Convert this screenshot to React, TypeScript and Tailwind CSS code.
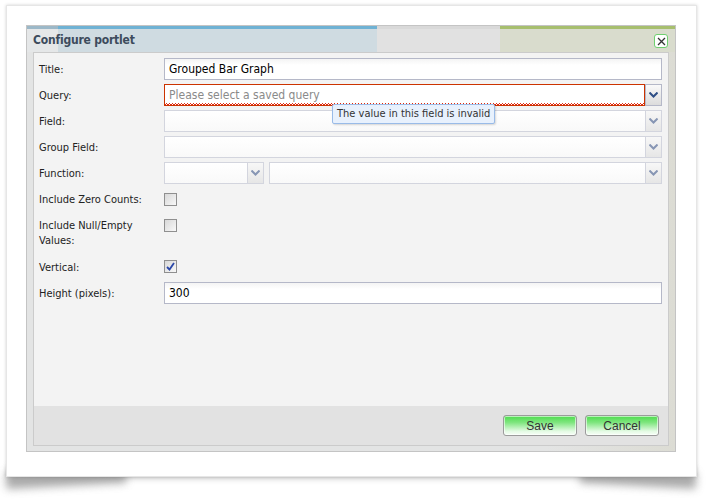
import React from 'react';

const font = { fontFamily: 'Tahoma, "DejaVu Sans Condensed", "Liberation Sans", sans-serif' };

const Chevron = ({ dark }: { dark?: boolean }) => (
  <svg width="9" height="6" viewBox="0 0 9 6">
    <path d="M0.5 0.5 L4.5 4.5 L8.5 0.5" fill="none" stroke={dark ? '#2f4f86' : '#8796b4'} strokeWidth="2" />
  </svg>
);

const Trigger = ({ dark }: { dark?: boolean }) => (
  <div
    className={`w-[17px] h-full shrink-0 flex items-center justify-center border ${
      dark ? 'border-[#b5b8c8] bg-[linear-gradient(#fafafa,#dcdcdc)]' : 'border-[#d3d5de] bg-[linear-gradient(#f7f7f7,#e6e6e6)]'
    }`}
  >
    <Chevron dark={dark} />
  </div>
);

const Combo = ({ className = '' }: { className?: string }) => (
  <div className={`h-[22px] flex ${className}`}>
    <div className="flex-1 border border-r-0 border-[#d3d5de] bg-[linear-gradient(#ffffff,#f9f9f9)]" />
    <Trigger />
  </div>
);

const Checkbox = ({ checked }: { checked?: boolean }) => (
  <div className="w-[13px] h-[13px] border border-[#8f8f8f] bg-[linear-gradient(135deg,#d8d8d8,#f8f8f8)] flex items-center justify-center">
    {checked && (
      <svg width="9" height="9" viewBox="0 0 9 9">
        <path d="M1 5 L3.5 7.5 L8 1" fill="none" stroke="#2a47a8" strokeWidth="1.8" />
      </svg>
    )}
  </div>
);

const Label = ({ children, className = '' }: { children: React.ReactNode; className?: string }) => (
  <div className={`w-[125px] shrink-0 text-[11px] leading-[15px] text-[#222] ${className}`}>{children}</div>
);

const GreenButton = ({ label, w }: { label: string; w: string }) => (
  <button
    className={`${w} h-[21px] rounded-[3px] border border-[#9b9b9b] bg-[linear-gradient(#4cdb4c_0%,#80e680_35%,#e4fae4_80%,#f6fff6_100%)] text-[12px] text-[#333] shadow-[inset_0_0_0_1px_rgba(255,255,255,0.6)]`}
    style={{ fontFamily: 'Arial, "Liberation Sans", sans-serif' }}
  >
    {label}
  </button>
);

export default function App() {
  return (
    <div className="w-[711px] h-[503px] bg-white relative overflow-hidden" style={font}>
      {/* curled paper shadows */}
      <div className="absolute left-[8px] top-[466px] w-[686px] h-[12px] bg-[#9a9a9a] blur-[3px] opacity-60" />
      <div className="absolute left-[6px] top-[470px] w-[120px] h-[16px] bg-[#8a8a8a] blur-[4px] -rotate-[3deg] opacity-70" />
      <div className="absolute left-[580px] top-[470px] w-[116px] h-[16px] bg-[#8a8a8a] blur-[4px] rotate-[3deg] opacity-70" />

      <div className="relative ml-[6px] mt-[5px] w-[691px] h-[472px] bg-white border border-[#e6e6e6] shadow-[0_0_3px_rgba(0,0,0,0.18)] pl-[19px] pt-[19px]">
        {/* dialog window */}
        <div className="relative w-[650px] h-[427px] border border-[#c4c4c4] flex flex-col">
          {/* background strip */}
          <div className="h-[3px] shrink-0 bg-[linear-gradient(to_right,#9cb8c8_0,#9cb8c8_31px,#6fb2d4_31px,#6fb2d4_350px,#d9d9d9_350px,#d9d9d9_473px,#a7bf6e_473px)]" />
          {/* header */}
          <div className="h-[23px] shrink-0 flex items-center pl-[6px] pb-[1px] bg-[linear-gradient(to_right,#e5e7e8_0,#e5e7e8_31px,#cfdbe1_31px,#cfdbe1_350px,#e1e1e1_350px,#e1e1e1_473px,#d9dccd_473px)] relative">
            <span className="text-[12px] font-bold text-[#3d4b5c] tracking-[-0.2px]">Configure portlet</span>
            <div className="absolute right-[7px] top-[5px] w-[14px] h-[14px] rounded-[3px] border border-[#6fcf6f] bg-white flex items-center justify-center">
              <svg width="9" height="9" viewBox="0 0 9 9">
                <path d="M1 1 L8 8 M8 1 L1 8" stroke="#333" strokeWidth="1.3" />
              </svg>
            </div>
          </div>
          {/* body */}
          <div className="flex-1 flex flex-col px-[6px] pb-[5px] bg-[linear-gradient(to_right,#e3e4e4_0,#e3e4e4_80%,#dcdcd4_100%)]">
            <div className="flex-1 flex flex-col border border-[#cbcbcb]">
              {/* form */}
              <div className="flex-1 bg-[#f3f3f3] pl-[5px] pr-[6px] pt-[5px] flex flex-col gap-[4px] relative">
                <div className="flex items-center h-[22px]">
                  <Label>Title:</Label>
                  <div className="flex-1 h-[22px] border border-[#b5b8c8] bg-[linear-gradient(#f4f4f4,#ffffff_30%)] flex items-center pl-[4px] text-[12px] text-black">
                    Grouped Bar Graph
                  </div>
                </div>
                <div className="flex items-center h-[22px]">
                  <Label>Query:</Label>
                  <div className="flex-1 h-[22px] flex">
                    <div className="relative flex-1 border border-[#cc3300] bg-white flex items-center pl-[4px] text-[12px] text-[#8a8a8a]">
                      Please select a saved query
                      <svg className="absolute left-0 bottom-0 w-full h-[3px]" preserveAspectRatio="none">
                        <defs>
                          <pattern id="wave" width="3" height="3" patternUnits="userSpaceOnUse">
                            <rect x="0" y="2" width="1" height="1" fill="#e02a10" />
                            <rect x="1" y="1" width="1" height="1" fill="#e02a10" />
                            <rect x="2" y="2" width="1" height="1" fill="#e02a10" />
                          </pattern>
                        </defs>
                        <rect width="100%" height="3" fill="url(#wave)" />
                      </svg>
                    </div>
                    <Trigger dark />
                  </div>
                </div>
                <div className="flex items-center h-[22px]">
                  <Label>Field:</Label>
                  <Combo className="flex-1" />
                </div>
                <div className="flex items-center h-[22px]">
                  <Label>Group Field:</Label>
                  <Combo className="flex-1" />
                </div>
                <div className="flex items-center h-[22px]">
                  <Label>Function:</Label>
                  <div className="flex-1 flex gap-[5px]">
                    <Combo className="w-[100px]" />
                    <Combo className="flex-1" />
                  </div>
                </div>
                <div className="flex items-start h-[22px]">
                  <Label className="pt-[4px]">Include Zero Counts:</Label>
                  <div className="pt-[5px]">
                    <Checkbox />
                  </div>
                </div>
                <div className="flex items-start h-[38px]">
                  <Label className="pt-[4px]">
                    Include Null/Empty
                    <br />
                    Values:
                  </Label>
                  <div className="pt-[5px]">
                    <Checkbox />
                  </div>
                </div>
                <div className="flex items-start h-[22px]">
                  <Label className="pt-[4px]">Vertical:</Label>
                  <div className="pt-[4px]">
                    <Checkbox checked />
                  </div>
                </div>
                <div className="flex items-center h-[22px]">
                  <Label>Height (pixels):</Label>
                  <div className="flex-1 h-[22px] border border-[#b5b8c8] bg-[linear-gradient(#f4f4f4,#ffffff_30%)] flex items-center pl-[4px] text-[12px] text-black">
                    300
                  </div>
                </div>

                {/* validation tooltip */}
                <div className="absolute left-[298px] top-[51px] h-[20px] px-[4px] border border-[#99bbe8] rounded-[2px] bg-[#e8f1fd] shadow-[1px_1px_2px_rgba(0,0,0,0.15)] flex items-center text-[11px] text-[#333] whitespace-nowrap">
                  The value in this field is invalid
                </div>
              </div>
              {/* footer */}
              <div className="h-[39px] shrink-0 bg-[#e2e2e2] border-t border-[#e2e2e2] flex items-center justify-end gap-[8px] pr-[9px] pb-[1px]">
                <GreenButton label="Save" w="w-[74px]" />
                <GreenButton label="Cancel" w="w-[74px]" />
              </div>
            </div>
          </div>
        </div>
      </div>
    </div>
  );
}
